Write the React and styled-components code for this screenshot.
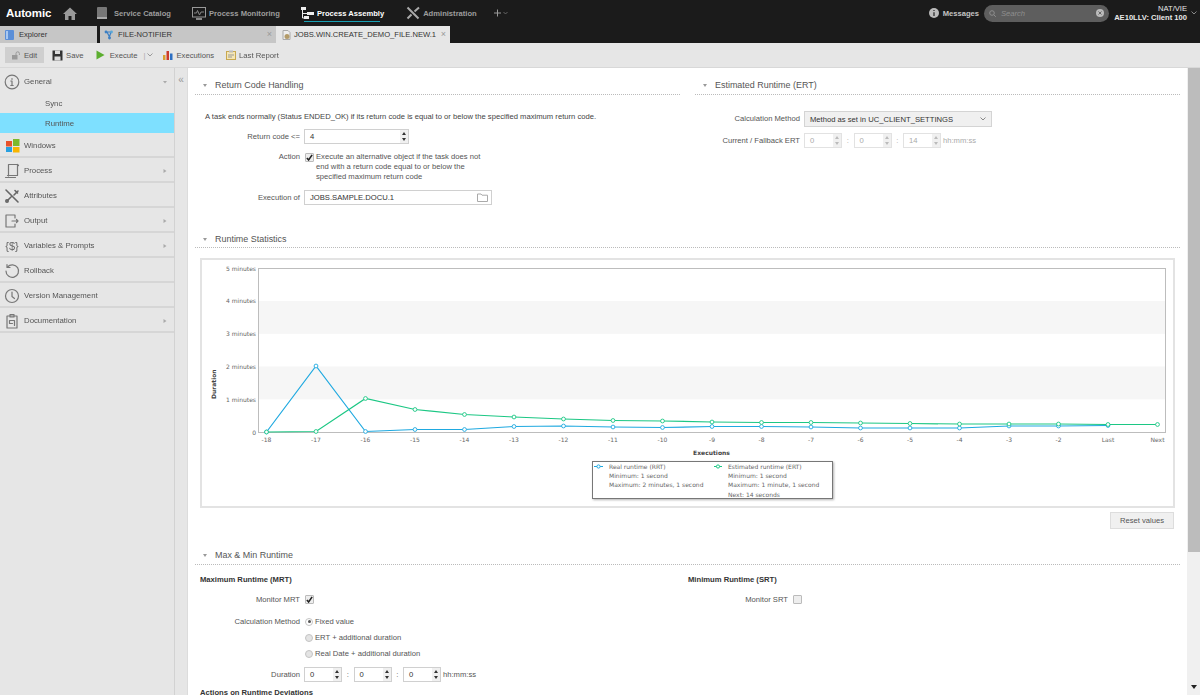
import React from "react";
import styled, { createGlobalStyle } from "styled-components";

const Global = createGlobalStyle`
  html, body { margin: 0; padding: 0; height: 100%; overflow: hidden; background: #fff; }
  body { font-family: "Liberation Sans", Arial, sans-serif; font-size: 7.65px; color: #555; }
`;

const Page = styled.div`
  width: 1200px; height: 695px; display: flex; flex-direction: column; overflow: hidden; filter: blur(0.3px);
`;
const Top = styled.header`
  height: 26px; background: #1b1b1b; display: flex; align-items: center; color: #aaa; flex: none;
`;
const Logo = styled.div`
  font: bold 11.5px "Liberation Sans", sans-serif; color: #fff; margin-left: 6px; width: 57px; letter-spacing: -0.1px;
`;
const NavItem = styled.div`
  display: flex; align-items: center; gap: ${p => p.$gap || 3}px; font-weight: bold; font-size: 7.6px; height: 26px; position: relative;
  margin-left: ${p => p.$ml}px; color: ${p => (p.$active ? "#fff" : "#9d9d9d")};
  ${p => p.$active && `&::after { content: ""; position: absolute; left: 4px; right: 4px; bottom: 4px; height: 1px; background: #18a0b4; }`}
`;
const TopRight = styled.div`
  margin-left: auto; display: flex; align-items: center; height: 26px;
`;
const Messages = styled.div`
  display: flex; align-items: center; gap: 4px; color: #c4c4c4; font-weight: bold; font-size: 7.6px; margin-right: 5px;
`;
const SearchBox = styled.div`
  width: 125px; height: 17px; border-radius: 9px; background: #5e5e5e; display: flex; align-items: center;
  padding: 0 5px; box-sizing: border-box; gap: 4px; color: #8e8e8e; font-style: italic; font-size: 7.6px;
  justify-content: space-between;
`;
const SearchLeft = styled.span`display: flex; align-items: center; gap: 5px;`;
const User = styled.div`
  width: 78px; text-align: right; color: #e8e8e8; font-size: 7.6px; line-height: 9px; font-weight: bold; white-space: nowrap;
`;
const UserName = styled.div`font-weight: normal;`;
const UserChevron = styled.span`width: 13px; display: flex; justify-content: center; color: #888;`;

const TabRow = styled.div`
  height: 17px; background: #1b1b1b; display: flex; flex: none; align-items: stretch;
`;
const Tab = styled.div`
  width: ${p => p.$w}px; margin-right: ${p => p.$mr}px; box-sizing: border-box; padding-left: ${p => p.$pl}px; padding-right: 4px;
  background: ${p => (p.$active ? "#e6e6e6" : "#c6c6c6")}; display: flex; align-items: center; gap: ${p => p.$gap}px;
  color: #333; font-size: 7.6px;
`;
const TabClose = styled.span`margin-left: auto; color: #9a9a9a; font-size: 9px; line-height: 1;`;

const Toolbar = styled.div`
  height: 25px; background: #e6e6e6; display: flex; align-items: center; flex: none; padding-left: 5px; box-sizing: border-box;
  border-bottom: 1px solid #d8d8d8;
`;
const ToolBtn = styled.div`
  display: flex; align-items: center; gap: 3px; height: 16px; color: #555; font-size: 7.7px;
  margin-right: ${p => p.$mr || 0}px; ${p => p.$on && `background: #cfcfcf; width: 39px; justify-content: center; box-sizing: border-box;`}
`;
const ToolSep = styled.span`color: #aaa; margin: 0 10px 0 6px; display: flex; align-items: center; gap: 2px;`;

const Body = styled.div`flex: 1; display: flex; min-height: 0;`;
const Sidebar = styled.nav`
  width: 175px; flex: none; background: #e6e6e6; border-right: 1px solid #d2d2d2; box-sizing: border-box;
`;
const SideRow = styled.div`
  height: 25px; box-sizing: border-box; display: flex; align-items: center; padding: 2px 6px 0 2px; gap: 2px; color: #555; font-size: 7.8px;
  border-bottom: 2px solid #d6d6d6;
`;
const GeneralRow = styled(SideRow)`border-bottom: none;`;
const SubRow = styled.div`
  height: ${p => p.$h}px; display: flex; align-items: center; padding-left: 45px; font-size: 7.8px; color: #555;
  background: ${p => (p.$on ? "#7ee0ff" : "transparent")};
`;
const Caret = styled.span`margin-left: auto; display: flex; color: #aaa;`;
const IconSlot = styled.span`width: 20px; height: 18px; display: flex; align-items: center; justify-content: center; flex: none;`;
const Strip = styled.div`
  width: 13px; flex: none; background: #e6e6e6; border-right: 1px solid #dcdcdc; box-sizing: border-box;
  color: #999; font-size: 10px; text-align: center; padding-top: 7px; line-height: 10px;
`;
const Main = styled.main`
  flex: 1; min-width: 0; overflow: hidden; padding: 0 7px 0 7px; background: #fff;
`;
const Scrollbar = styled.div`
  width: 13px; flex: none; background: #f0f0f0; display: flex; flex-direction: column; align-items: center; justify-content: space-between;
`;
const Thumb = styled.div`width: 12px; height: 484px; background: #bcbcbc;`;
const ScrollArrow = styled.div`
  width: 0; height: 0; border-left: 3px solid transparent; border-right: 3px solid transparent; border-top: 4px solid #222; margin-bottom: 6px;
`;

const TopGrid = styled.div`display: grid; grid-template-columns: 485px 485px; column-gap: 15px; height: 154px;`;
const SectionHead = styled.div`
  height: ${p => p.$h}px; box-sizing: border-box; border-bottom: 1px dotted #bbb; display: flex; align-items: center;
  color: #555; font-size: 8.95px; padding: ${p => p.$pt}px 0 0 8px; gap: 8px;
`;
const Tri = styled.span`
  width: 0; height: 0; border-left: 2.5px solid transparent; border-right: 2.5px solid transparent; border-top: 3px solid #999; flex: none;
`;
const Para = styled.p`margin: 17px 0 7px 10px; white-space: nowrap; line-height: 10px; color: #444;`;
const Row = styled.div`
  display: flex; align-items: ${p => p.$top ? "flex-start" : "center"}; min-height: 15px; margin-top: ${p => p.$mt || 0}px;
`;
const Label = styled.label`
  width: ${p => p.$w || 105}px; box-sizing: border-box; text-align: right; padding-right: 4px; flex: none; line-height: 10px; color: #555;
`;
const Input = styled.div`
  width: ${p => p.$w}px; height: 15px; box-sizing: border-box; border: 1px solid #d4d4d4; background: #fff; display: flex; align-items: center;
  padding-left: 5px; color: ${p => (p.$dim ? "#aaa" : "#333")}; flex: none; position: relative;
  border-color: ${p => (p.$dim ? "#e2e2e2" : "#d0d0d0")};
`;
const Spin = styled.span`
  position: absolute; right: 0; top: 0; bottom: 0; width: 8px; background: #f0f0f0; display: flex; flex-direction: column; align-items: center; justify-content: space-evenly;
`;
const Up = styled.i`
  width: 0; height: 0; border-left: 2.5px solid transparent; border-right: 2.5px solid transparent; border-bottom: 3px solid ${p => (p.$dim ? "#bbb" : "#333")};
`;
const Down = styled.i`
  width: 0; height: 0; border-left: 2.5px solid transparent; border-right: 2.5px solid transparent; border-top: 3px solid ${p => (p.$dim ? "#bbb" : "#333")};
`;
const FolderSlot = styled.span`position: absolute; right: 3px; top: 2px; display: flex;`;
const Check = styled.span`
  width: 9px; height: 9px; box-sizing: border-box; border: 1px solid #bbb; background: #eee; border-radius: 1px; flex: none; margin: ${p => p.$mt || 0}px 2px 0 1px;
  display: flex; align-items: center; justify-content: center;
`;
const CheckText = styled.span`line-height: 10px; color: #555; white-space: pre-line; width: 180px;`;
const Radio = styled.span`
  width: 8px; height: 8px; border-radius: 50%; box-sizing: border-box; border: 1px solid #c4c4c4; background: #e4e4e4; flex: none; margin: 0 2px 0 1px;
  display: flex; align-items: center; justify-content: center;
  ${p => p.$on && `background: #fff; &::after { content: ""; width: 3px; height: 3px; border-radius: 50%; background: #555; }`}
`;
const Colon = styled.span`width: 11.5px; text-align: center; flex: none; color: ${p => (p.$dim ? "#aaa" : "#555")};`;
const Hint = styled.span`margin-left: 2px; color: ${p => (p.$dim ? "#aaa" : "#555")};`;
const Select = styled.div`
  width: 188px; height: 16px; box-sizing: border-box; border: 1px solid #d4d4d4; background: #f0f0f0; display: flex; align-items: center;
  padding: 0 5px; color: #333; justify-content: space-between;
`;
const StatPanel = styled.div`
  margin-left: 5px; width: 975px; height: 250px; box-sizing: border-box; border: 2px solid #e3e3e3; margin-top: 10px; background: #fff;
`;
const ChartSvg = styled.svg`display: block; margin: -2px;`;
const ChartLabel = styled.text`
  font-family: "DejaVu Sans", Verdana, sans-serif; font-size: 6px; fill: ${p => p.$fill || "#666"}; font-weight: ${p => p.$bold ? "bold" : "normal"};
`;
const ResetRow = styled.div`display: flex; justify-content: flex-end; padding-right: 6px; margin-top: 4px;`;
const ResetBtn = styled.div`
  width: 64px; height: 17px; box-sizing: border-box; border: 1px solid #ddd; background: #f0f0f0; display: flex; align-items: center; justify-content: center; color: #555;
`;
const TwoCol = styled.div`display: grid; grid-template-columns: 488px 1fr; margin-left: 5px;`;
const Bold = styled.div`font-weight: bold; color: #333; line-height: 10px; margin-top: ${p => p.$mt}px; white-space: nowrap;`;
const Legend = styled.rect`filter: drop-shadow(1px 1px 1px rgba(0,0,0,.3));`;

const Stroke = ({ size = 14, color = "#777", children, w = 1.2, fill = "none", vb = "0 0 16 16" }) => (
  <svg width={size} height={size} viewBox={vb} fill={fill} stroke={color} strokeWidth={w} strokeLinecap="round" strokeLinejoin="round">{children}</svg>
);

const xs = Array.from({ length: 19 }, (_, i) => 266.5 + i * 49.5);
const labels = ["-18","-17","-16","-15","-14","-13","-12","-11","-10","-9","-8","-7","-6","-5","-4","-3","-2","Last","Next"];
const rrt = [432,366,431.5,429.5,429.5,426.5,426,427,427.5,426.5,426.5,427,428,428,428,426,426,425.5];
const ert = [432,431.5,398.5,409.5,414.5,417,419,420.5,421,422,422.5,422.5,423,423.5,424,424,424,424.5,424.5];
const BLUE = "#1fa9e0", GREEN = "#1cc784";

const Series = ({ data, color }) => (
  <g>
    <polyline points={data.map((y, i) => `${xs[i]},${y}`).join(" ")} fill="none" stroke={color} strokeWidth="1.2" />
    {data.map((y, i) => <circle key={i} cx={xs[i]} cy={y} r="1.9" fill="#fff" stroke={color} strokeWidth="0.9" />)}
  </g>
);

const Chart = () => (
  <ChartSvg width="975" height="250" viewBox="200 258 975 250">
    <rect x="258.5" y="301" width="907" height="32.8" fill="#f6f6f6" />
    <rect x="258.5" y="366.5" width="907" height="32.8" fill="#f6f6f6" />
    <rect x="258.5" y="268.5" width="907" height="164" fill="none" stroke="#bdbdbd" />
    {["5 minutes","4 minutes","3 minutes","2 minutes","1 minutes","0"].map((t, i) => (
      <ChartLabel key={t} x="256" y={270.5 + i * 32.8} textAnchor="end">{t}</ChartLabel>
    ))}
    {labels.map((t, i) => <ChartLabel key={t} x={xs[i]} y="441.5" textAnchor="middle">{t}</ChartLabel>)}
    <ChartLabel x="0" y="0" transform="translate(216,399) rotate(-90)" $bold $fill="#444">Duration</ChartLabel>
    <ChartLabel x="711.5" y="455" textAnchor="middle" $bold $fill="#444">Executions</ChartLabel>
    <Series data={rrt} color={BLUE} />
    <Series data={ert} color={GREEN} />
    <Legend x="592.5" y="461.5" width="240" height="37" fill="#fff" stroke="#777" />
    <line x1="594" y1="466.5" x2="603" y2="466.5" stroke={BLUE} />
    <circle cx="598.5" cy="466.5" r="1.6" fill="#fff" stroke={BLUE} />
    <line x1="714" y1="466.5" x2="722" y2="466.5" stroke={GREEN} />
    <circle cx="718" cy="466.5" r="1.6" fill="#fff" stroke={GREEN} />
    {["Real runtime (RRT)","Minimum: 1 second","Maximum: 2 minutes, 1 second"].map((t, i) => (
      <ChartLabel key={t} x="609" y={468.5 + i * 9.4}>{t}</ChartLabel>
    ))}
    {["Estimated runtime (ERT)","Minimum: 1 second","Maximum: 1 minute, 1 second","Next: 14 seconds"].map((t, i) => (
      <ChartLabel key={t} x="728" y={468.5 + i * 9.4}>{t}</ChartLabel>
    ))}
  </ChartSvg>
);

const Tick = () => (
  <svg width="7" height="7" viewBox="0 0 8 8"><path d="M1 4.5 L3 6.8 L7 1" fill="none" stroke="#222" strokeWidth="1.8" /></svg>
);

const SpinInput = ({ v, w, dim }) => (
  <Input $w={w} $dim={dim}>{v}<Spin><Up $dim={dim} /><Down $dim={dim} /></Spin></Input>
);

const Time = ({ vals, dim }) => (
  <>
    <SpinInput v={vals[0]} w={38} dim={dim} /><Colon $dim={dim}>:</Colon>
    <SpinInput v={vals[1]} w={38} dim={dim} /><Colon $dim={dim}>:</Colon>
    <SpinInput v={vals[2]} w={38} dim={dim} /><Hint $dim={dim}>hh:mm:ss</Hint>
  </>
);

const Chevron = ({ dir = "right", c = "#aaa" }) => (
  dir === "right"
    ? <svg width="6" height="6" viewBox="0 0 6 6"><path d="M1.5 1 L4.5 3 L1.5 5Z" fill={c} /></svg>
    : <svg width="6" height="6" viewBox="0 0 6 6"><path d="M1 2 L5 2 L3 4.5Z" fill={c} /></svg>
);

const sideItems = [
  ["Windows", <svg width="15" height="15" viewBox="0 0 15 15"><rect x="1" y="3" width="6" height="5.5" fill="#e8522a"/><rect x="8" y="1" width="6.5" height="7" fill="#7cb92b"/><rect x="1" y="9" width="6" height="5" fill="#28a0e0"/><rect x="8" y="9" width="6.5" height="5.5" fill="#f7b500"/></svg>, false],
  ["Process", <Stroke size={16}><path d="M4.5 1.5h9v11H3.5M4.5 1.5v11.5M1.5 14.5h10" /><path d="M13.5 1.5 l1 1" /></Stroke>, true],
  ["Attributes", <Stroke size={16} w={1.6} color="#666"><path d="M2 2l12 12M14 3l-4 4M7 9l-4 4" /><circle cx="3" cy="13" r="1.2" /><path d="M11 2.5l2.5 2.5" /></Stroke>, false],
  ["Output", <Stroke size={16}><path d="M11 5V2H2v12h9v-3" /><path d="M8 8h6M12.5 6.5L14 8l-1.5 1.5" /></Stroke>, true],
  ["Variables & Prompts", null, true],
  ["Rollback", <Stroke size={16}><path d="M3.5 4A6.3 6.3 0 1 1 2 8" /><path d="M3 1.5V4.5H6" /></Stroke>, false],
  ["Version Management", <Stroke size={16}><circle cx="8" cy="8" r="6.5" /><path d="M8 4v4.5l2.5 2" /></Stroke>, false],
  ["Documentation", <Stroke size={16}><rect x="3" y="3" width="10" height="12" /><path d="M6 1.5h4V4H6zM5.5 7.5h5v5M5.5 7.5v3h3" /></Stroke>, true],
];

const VarIcon = styled.span`color: #666; font-size: 11px; white-space: nowrap; font-family: "Liberation Sans", sans-serif;`;

export default function App() {
  return (
    <Page>
      <Global />
      <Top>
        <Logo>Automic</Logo>
        <svg width="14" height="13" viewBox="0 0 14 13"><path d="M7 .5 L0 7 h2 v6 h3.5 V9 h3 v4 H12 V7 h2z" fill="#999" /></svg>
        <NavItem $ml={20} $gap={7}>
          <svg width="10" height="13" viewBox="0 0 10 13"><rect width="10" height="12" rx="1" fill="#777" /><rect y="10" width="10" height="2" fill="#aaa" /></svg>
          Service Catalog
        </NavItem>
        <NavItem $ml={21}>
          <svg width="14" height="13" viewBox="0 0 14 13"><rect x=".5" y=".5" width="13" height="9.5" fill="none" stroke="#999" /><path d="M2 6h2.5l1-2.5L7.5 8l1.5-3h3" fill="none" stroke="#888" /><rect x="4" y="11" width="6" height="2" fill="#888" /></svg>
          Process Monitoring
        </NavItem>
        <NavItem $ml={20} $active>
          <svg width="14" height="14" viewBox="0 0 14 14"><path d="M1 1h5v3H1zM7 6h7v3H7zM4 10h5v3H4z" fill="#eee" /><path d="M2.5 4v8H4M2.5 7.5H7" fill="none" stroke="#eee" /></svg>
          Process Assembly
        </NavItem>
        <NavItem $ml={22}>
          <svg width="14" height="14" viewBox="0 0 14 14"><path d="M1.5 1.5L12.5 12.5M13 1.5L8.5 5.5M5.5 8.5L1.5 12.5" fill="none" stroke="#aaa" strokeWidth="2" /></svg>
          Administration
        </NavItem>
        <NavItem $ml={17}>
          <svg width="14" height="8" viewBox="0 0 14 8"><path d="M3.5 .5v7M0 4h7" stroke="#999" strokeWidth="1" /><path d="M9.5 3l2 2 2-2" fill="none" stroke="#777" strokeWidth=".8" /></svg>
        </NavItem>
        <TopRight>
          <Messages>
            <svg width="10" height="10" viewBox="0 0 10 10"><circle cx="5" cy="5" r="5" fill="#bbb" /><path d="M5 2v1M5 4.2V8" stroke="#222" strokeWidth="1.2" /></svg>
            Messages
          </Messages>
          <SearchBox>
            <SearchLeft>
              <svg width="7" height="7" viewBox="0 0 7 7"><circle cx="3" cy="3" r="2.3" fill="none" stroke="#8e8e8e" /><path d="M4.8 4.8L6.8 6.8" stroke="#8e8e8e" /></svg>
              Search
            </SearchLeft>
            <svg width="8" height="8" viewBox="0 0 8 8"><circle cx="4" cy="4" r="4" fill="#bbb" /><path d="M2.5 2.5l3 3M5.5 2.5l-3 3" stroke="#666" /></svg>
          </SearchBox>
          <User><UserName>NAT/VIE</UserName>AE10LLV: Client 100</User>
          <UserChevron><svg width="6" height="4" viewBox="0 0 6 4"><path d="M.5 .5L3 3l2.5-2.5" fill="none" stroke="#888" /></svg></UserChevron>
        </TopRight>
      </Top>
      <TabRow>
        <Tab $w={97} $mr={3} $pl={5} $gap={5}>
          <svg width="9" height="10" viewBox="0 0 9 10"><rect width="9" height="10" rx="1" fill="#5b8fd8" /><rect x="1" y="1" width="2" height="8" fill="#a9c8f0" /></svg>
          <span>Explorer</span>
        </Tab>
        <Tab $w={176} $mr={0} $pl={4} $gap={4}>
          <svg width="10" height="10" viewBox="0 0 10 10"><path d="M2 2h5M3 2l3 6M7 2L5 8" fill="none" stroke="#3b7fc4" strokeWidth="1.2" /><circle cx="2" cy="2" r="1.4" fill="#3b7fc4" /><circle cx="7.5" cy="2" r="1.4" fill="#5aa8d8" /><circle cx="5.5" cy="8" r="1.4" fill="#3b7fc4" /></svg>
          FILE-NOTIFIER
          <TabClose>×</TabClose>
        </Tab>
        <Tab $w={174} $mr={0} $pl={6} $gap={3} $active>
          <svg width="9" height="10" viewBox="0 0 9 10"><path d="M1 .5h5l2 2V9.5H1z" fill="#eee" stroke="#aaa" /><circle cx="5" cy="6.5" r="2.5" fill="#b39b6a" /></svg>
          <span>JOBS.WIN.CREATE_DEMO_FILE.NEW.1</span>
          <TabClose>×</TabClose>
        </Tab>
      </TabRow>
      <Toolbar>
        <ToolBtn $on $mr={8}>
          <svg width="9" height="9" viewBox="0 0 9 9"><rect x="0" y="4" width="5.5" height="4.5" fill="#999" /><path d="M4 4V2.5a1.7 1.7 0 0 1 3.4 0V4" fill="none" stroke="#999" /></svg>
          Edit
        </ToolBtn>
        <ToolBtn $mr={12}>
          <svg width="11" height="11" viewBox="0 0 11 11"><path d="M.5.5h10v10H.5z" fill="#333" /><rect x="3" y=".5" width="5" height="3.5" fill="#ddd" /><rect x="2.5" y="6.5" width="6" height="4" fill="#ddd" /></svg>
          Save
        </ToolBtn>
        <ToolBtn>
          <svg width="9" height="10" viewBox="0 0 9 10"><path d="M.5.5L8.5 5 .5 9.5z" fill="#5cae2f" /></svg>
          &nbsp;Execute
        </ToolBtn>
        <ToolSep>|<svg width="6" height="4" viewBox="0 0 6 4"><path d="M.5 .5L3 3l2.5-2.5" fill="none" stroke="#999" /></svg></ToolSep>
        <ToolBtn $mr={12}>
          <svg width="10" height="10" viewBox="0 0 10 10"><rect y="5" width="2.5" height="5" fill="#d9a030" /><rect x="3.5" y="1" width="2.5" height="9" fill="#cc3b2b" /><rect x="7" y="3.5" width="2.5" height="6.5" fill="#2d6fc2" /></svg>
          Executions
        </ToolBtn>
        <ToolBtn>
          <svg width="10" height="10" viewBox="0 0 10 10"><rect x=".5" y="1.5" width="9" height="8" fill="#f5e6b5" stroke="#c8a850" /><rect x="3" y=".5" width="4" height="2" fill="#bbb" /><path d="M2 5h6M2 7h4" stroke="#999" /></svg>
          Last Report
        </ToolBtn>
      </Toolbar>
      <Body>
        <Sidebar>
          <GeneralRow>
            <IconSlot><Stroke size={16}><circle cx="8" cy="8" r="6.8" /><path d="M8 4.5v.8M6.8 7H8v4.5M6.800 11.5h2.4" /></Stroke></IconSlot>
            General
            <Caret><Chevron dir="down" /></Caret>
          </GeneralRow>
          <SubRow $h={20}>Sync</SubRow>
          <SubRow $h={20} $on>Runtime</SubRow>
          {sideItems.map(([name, icon, more]) => (
            <SideRow key={name}>
              <IconSlot>{icon || <VarIcon>{"{$}"}</VarIcon>}</IconSlot>
              {name}
              {more && <Caret><Chevron /></Caret>}
            </SideRow>
          ))}
        </Sidebar>
        <Strip>«</Strip>
        <Main>
          <TopGrid>
            <section>
              <SectionHead $h={27} $pt={8}><Tri />Return Code Handling</SectionHead>
              <Para>A task ends normally (Status ENDED_OK) if its return code is equal to or below the specified maximum return code.</Para>
              <Row><Label $w={109}>Return code &lt;=</Label><SpinInput v="4" w={105} /></Row>
              <Row $top $mt={8}><Label $w={109}>Action</Label><Check $mt={1}><Tick /></Check>
                <CheckText>{"Execute an alternative object if the task does not\nend with a return code equal to or below the\nspecified maximum return code"}</CheckText>
              </Row>
              <Row $mt={8}><Label $w={109}>Execution of</Label>
                <Input $w={188}>JOBS.SAMPLE.DOCU.1<FolderSlot><svg width="11" height="9" viewBox="0 0 11 9"><path d="M.5 8.5V1h3.5l1 1.2h5.5v6.3z" fill="none" stroke="#aaa" /></svg></FolderSlot></Input>
              </Row>
            </section>
            <section>
              <SectionHead $h={27} $pt={8}><Tri />Estimated Runtime (ERT)</SectionHead>
              <Row $mt={16}><Label $w={109}>Calculation Method</Label>
                <Select>Method as set in UC_CLIENT_SETTINGS<svg width="6" height="4" viewBox="0 0 6 4"><path d="M.5 .5L3 3l2.5-2.5" fill="none" stroke="#888" /></svg></Select>
              </Row>
              <Row $mt={6}><Label $w={109}>Current / Fallback ERT</Label><Time vals={[0, 0, 14]} dim /></Row>
            </section>
          </TopGrid>
          <SectionHead $h={26} $pt={9}><Tri />Runtime Statistics</SectionHead>
          <StatPanel><Chart /></StatPanel>
          <ResetRow><ResetBtn>Reset values</ResetBtn></ResetRow>
          <SectionHead $h={36} $pt={17}><Tri />Max &amp; Min Runtime</SectionHead>
          <TwoCol>
            <Bold $mt={10}>Maximum Runtime (MRT)</Bold>
            <Bold $mt={10}>Minimum Runtime (SRT)</Bold>
          </TwoCol>
          <TwoCol>
            <Row $mt={7}><Label $w={104}>Monitor MRT</Label><Check><Tick /></Check></Row>
            <Row $mt={7}><Label $w={104}>Monitor SRT</Label><Check /></Row>
          </TwoCol>
          <Row $mt={7}><Label $w={109}>Calculation Method</Label><Radio $on />Fixed value</Row>
          <Row $mt={1}><Label $w={109} /><Radio />ERT + additional duration</Row>
          <Row $mt={1}><Label $w={109} /><Radio />Real Date + additional duration</Row>
          <Row $mt={6}><Label $w={109}>Duration</Label><Time vals={[0, 0, 0]} /></Row>
          <TwoCol><Bold $mt={6}>Actions on Runtime Deviations</Bold></TwoCol>
        </Main>
        <Scrollbar><Thumb /><ScrollArrow /></Scrollbar>
      </Body>
    </Page>
  );
}
